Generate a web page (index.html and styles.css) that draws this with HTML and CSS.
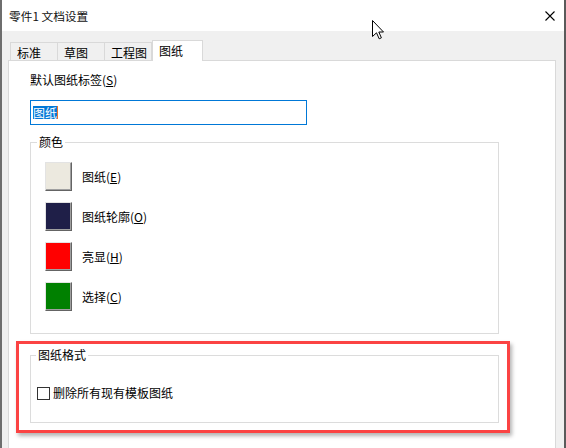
FILE: index.html
```html
<!DOCTYPE html>
<html lang="zh-CN">
<head>
<meta charset="utf-8">
<title>零件1 文档设置</title>
<link rel="stylesheet" href="styles.css">
</head>
<body>
<div class="window">
  <div class="titlebar">
    <span class="title">零件1 文档设置</span>
    <svg class="close" width="10" height="10" viewBox="0 0 10 10"><path d="M0.5 0.5 L9.5 9.5 M9.5 0.5 L0.5 9.5" stroke="#000" stroke-width="1.1" fill="none"/></svg>
  </div>
  <div class="client">
    <div class="tabs">
      <div class="tab">标准</div>
      <div class="tab">草图</div>
      <div class="tab">工程图</div>
      <div class="tab active">图纸</div>
    </div>
    <div class="panel">
      <div class="field-label">默认图纸标签(<u>S</u>)</div>
      <div class="textbox"><span class="sel">图纸</span><span class="caret"></span></div>
      <fieldset class="group colors">
        <legend>颜色</legend>
        <div class="group-body">
          <div class="color-row"><span class="swatch sw-paper"></span><span>图纸(<u>E</u>)</span></div>
          <div class="color-row"><span class="swatch sw-outline"></span><span>图纸轮廓(<u>O</u>)</span></div>
          <div class="color-row"><span class="swatch sw-highlight"></span><span>亮显(<u>H</u>)</span></div>
          <div class="color-row"><span class="swatch sw-select"></span><span>选择(<u>C</u>)</span></div>
        </div>
      </fieldset>
      <fieldset class="group format">
        <legend>图纸格式</legend>
        <div class="group-body">
          <label class="check"><span class="box"></span>删除所有现有模板图纸</label>
        </div>
      </fieldset>
    </div>
  </div>
  <div class="annotation"></div>
  <svg class="cursor" width="13" height="20" viewBox="0 0 13 20"><path d="M0.5 0.5 L0.5 16.5 L4.5 12.8 L7.2 18.8 L9.4 17.8 L6.8 12 L11.5 12 Z" fill="#fff" stroke="#000" stroke-width="1" stroke-linejoin="miter"/></svg>
</div>
</body>
</html>
```
FILE: styles.css
```css
* { box-sizing: border-box; }
html, body { margin: 0; padding: 0; }
body {
  width: 566px;
  height: 448px;
  overflow: hidden;
  background: #f0f0f0;
  font-family: "Noto Sans CJK SC", "Noto Sans", sans-serif;
  font-size: 12px;
  color: #000;
}
.window {
  position: relative;
  width: 566px;
  height: 448px;
  overflow: hidden;
  background: #f0f0f0;
  border-left: 2px solid #6e6e6e;
  border-right: 2px solid #5a5a5a;
}
.titlebar {
  height: 31px;
  background: #fff;
  display: flex;
  align-items: center;
  justify-content: space-between;
  padding: 0 9px 0 7px;
}
.title {
  font-size: 11.7px;
  line-height: 14px;
  color: #111;
}
.close { display: block; margin-top: 1px; }
.client {
  padding: 9px 8px 0 6px;
}
.tabs {
  display: flex;
  align-items: flex-end;
  height: 20px;
  padding-left: 2px;
  position: relative;
  z-index: 1;
}
.tab {
  width: 48px;
  height: 18px;
  margin-right: -1px;
  padding: 2px 0 0 6px;
  line-height: 16px;
  border: 1px solid #d9d9d9;
  border-bottom: none;
  background: #f0f0f0;
  white-space: nowrap;
}
.tab.active {
  width: 51px;
  height: 21px;
  margin-left: 1px;
  margin-bottom: -1px;
  padding-top: 1px;
  line-height: 17px;
  background: #fff;
}
.panel {
  height: 400px;
  background: #fff;
  border: 1px solid #d9d9d9;
  padding: 12px 0 0 21px;
}
.field-label {
  line-height: 14px;
}
u { text-decoration: underline; text-underline-offset: 1px; }
.textbox {
  margin-top: 13px;
  width: 277px;
  height: 25px;
  border: 1px solid #0078d7;
  padding-left: 2px;
  display: flex;
  align-items: center;
}
.sel {
  background: #0078d7;
  color: #fff;
  line-height: 13px;
  padding-right: 1px;
}
.caret {
  width: 1px;
  height: 13px;
  margin-left: -1px;
  background: #e8742a;
}
.group {
  margin: 0;
  padding: 0;
  min-width: 0;
  width: 469px;
  border: 1px solid #dcdcdc;
}
.group legend {
  margin-left: 6px;
  padding: 0 2px;
  line-height: 14px;
}
.colors {
  margin-top: 10px;
}
.colors .group-body {
  padding: 13px 0 22px 14px;
}
.color-row {
  display: flex;
  align-items: center;
  gap: 10px;
  height: 29px;
  line-height: 14px;
  margin-bottom: 11px;
}
.color-row:last-child { margin-bottom: 0; }
.swatch {
  display: block;
  width: 27px;
  height: 29px;
  border: 1px solid;
  border-color: #e3e3e3 #646464 #646464 #e3e3e3;
  box-shadow: inset -1px -1px 0 #a0a0a0;
}
.sw-paper { background: #ece9df; }
.sw-outline { background: #1f1f48; }
.sw-highlight { background: #ff0000; }
.sw-select { background: #008000; }
.format {
  margin-top: 14px;
}
.format legend { margin-left: 5px; }
.format .group-body {
  padding: 24px 0 22px 6px;
}
.check {
  display: flex;
  align-items: center;
  line-height: 14px;
}
.box {
  display: block;
  width: 13px;
  height: 13px;
  border: 1px solid #333;
  background: #fff;
  margin-right: 3px;
}
.annotation {
  position: absolute;
  left: 14px;
  top: 341px;
  width: 494px;
  height: 92px;
  border: 3px solid #fb4343;
  box-shadow: 2px 3px 4px rgba(0, 0, 0, 0.3);
}
.cursor {
  position: absolute;
  left: 370px;
  top: 20px;
}
```
